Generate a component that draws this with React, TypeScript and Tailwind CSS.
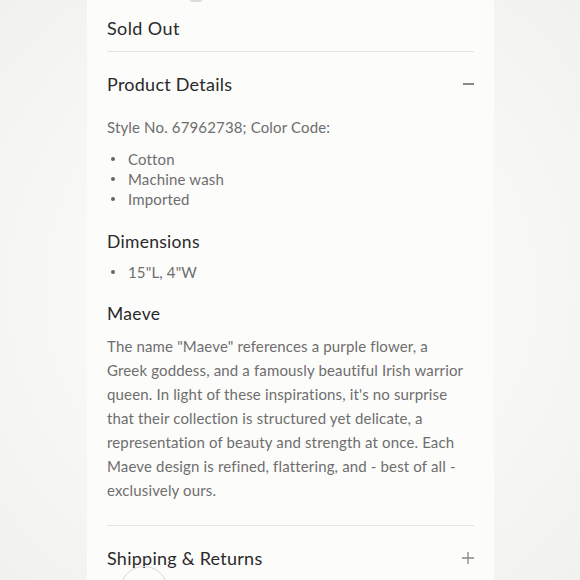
import React from "react";

const lines = [
  'The name "Maeve" references a purple flower, a',
  "Greek goddess, and a famously beautiful Irish warrior",
  "queen. In light of these inspirations, it's no surprise",
  "that their collection is structured yet delicate, a",
  "representation of beauty and strength at once. Each",
  "Maeve design is refined, flattering, and - best of all -",
  "exclusively ours.",
];

export default function App() {
  return (
    <div
      className="relative w-[580px] h-[580px] overflow-hidden bg-[#f4f4f2]"
      style={{ fontFamily: "Lato, 'Noto Sans', sans-serif" }}
    >
      <div className="absolute inset-0 bg-[radial-gradient(ellipse_at_center,#fafaf8_40%,#f1f1ef_100%)]" />
      <div className="relative ml-[87px] w-[407px] h-full bg-[#fcfcfa] px-[20px]">
        <div className="absolute left-[102px] top-[-6px] w-[14px] h-[8px] rounded-full bg-[#dcdcdc]" />
        <div className="pt-[14px] h-[52px] border-b border-[#e3e3e1]">
          <div className="text-[18px] leading-[28px] tracking-[0.4px] text-[#2a2a2a]">Sold Out</div>
        </div>
        <div className="flex items-center justify-between h-[64px]">
          <div className="text-[18px] tracking-[0.25px] text-[#2a2a2a]">Product Details</div>
          <div className="w-[11px] h-[1.5px] bg-[#888]" />
        </div>
        <div className="text-[15px] leading-[20px] tracking-[0.15px] text-[#6e6e6e]">
          <div className="mt-[1px]">Style No. 67962738; Color Code:</div>
          <ul className="mt-[12px]">
            {["Cotton", "Machine wash", "Imported"].map((t) => (
              <li key={t} className="flex items-center h-[20px]">
                <span className="w-[4px] h-[4px] rounded-full bg-[#666] ml-[4px] mr-[13px]" />
                {t}
              </li>
            ))}
          </ul>
          <div className="mt-[21px] text-[17.5px] leading-[24px] tracking-[0.3px] text-[#2a2a2a]">Dimensions</div>
          <ul className="mt-[8px]">
            <li className="flex items-center h-[20px]">
              <span className="w-[4px] h-[4px] rounded-full bg-[#666] ml-[4px] mr-[13px]" />
              15"L, 4"W
            </li>
          </ul>
          <div className="mt-[20px] text-[17.5px] leading-[24px] tracking-[0.3px] text-[#2a2a2a]">Maeve</div>
          <div className="mt-[8px] leading-[24px]">
            {lines.map((l) => (
              <div key={l} className="whitespace-nowrap">{l}</div>
            ))}
          </div>
        </div>
        <div className="mt-[23px] border-t border-[#e3e3e1]" />
        <div className="flex items-center justify-between h-[64px]">
          <div className="text-[18px] tracking-[0.25px] text-[#2a2a2a]">Shipping &amp; Returns</div>
          <svg width="14" height="14" viewBox="0 0 14 14" className="mr-[-1px]">
            <path d="M7 1v12M1 7h12" stroke="#888" strokeWidth="1.3" />
          </svg>
        </div>
        <div className="absolute left-[33px] top-[566px] w-[48px] h-[48px] rounded-full border border-[#d8d8d8]" />
      </div>
    </div>
  );
}
